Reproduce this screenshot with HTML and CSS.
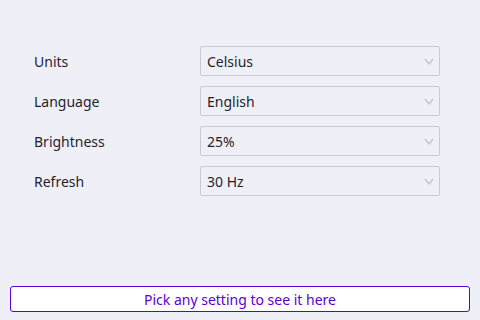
FILE: index.html
```html
<!DOCTYPE html>
<html lang="en">
<head>
    <meta charset="UTF-8">
    <meta name="viewport" content="width=device-width, initial-scale=1.0">
    <title>Settings</title>
    <link rel="stylesheet" href="styles.css">
</head>
<body>
    <div class="page">
        <div class="settings">
            <div class="setting-row">
                <label class="setting-label" for="units">Units</label>
                <div class="select-wrap">
                    <select class="setting-select" id="units">
                        <option>Celsius</option>
                        <option>Fahrenheit</option>
                    </select>
                    <svg class="chevron" viewBox="0 0 10 7" width="10" height="7"><path d="M1 1 L5 6 L9 1" fill="none" stroke="currentColor" stroke-width="1.4"/></svg>
                </div>
            </div>
            <div class="setting-row">
                <label class="setting-label" for="language">Language</label>
                <div class="select-wrap">
                    <select class="setting-select" id="language">
                        <option>English</option>
                        <option>Deutsch</option>
                    </select>
                    <svg class="chevron" viewBox="0 0 10 7" width="10" height="7"><path d="M1 1 L5 6 L9 1" fill="none" stroke="currentColor" stroke-width="1.4"/></svg>
                </div>
            </div>
            <div class="setting-row">
                <label class="setting-label" for="brightness">Brightness</label>
                <div class="select-wrap">
                    <select class="setting-select" id="brightness">
                        <option>25%</option>
                        <option>50%</option>
                        <option>100%</option>
                    </select>
                    <svg class="chevron" viewBox="0 0 10 7" width="10" height="7"><path d="M1 1 L5 6 L9 1" fill="none" stroke="currentColor" stroke-width="1.4"/></svg>
                </div>
            </div>
            <div class="setting-row">
                <label class="setting-label" for="refresh">Refresh</label>
                <div class="select-wrap">
                    <select class="setting-select" id="refresh">
                        <option>30 Hz</option>
                        <option>60 Hz</option>
                    </select>
                    <svg class="chevron" viewBox="0 0 10 7" width="10" height="7"><path d="M1 1 L5 6 L9 1" fill="none" stroke="currentColor" stroke-width="1.4"/></svg>
                </div>
            </div>
        </div>
        <div class="status" id="status">Pick any setting to see it here</div>
    </div>

    <script>
        // Show the last picked value in the status bar
        document.querySelectorAll('.setting-select').forEach(sel => {
            sel.addEventListener('change', () => {
                const label = document.querySelector(`label[for="${sel.id}"]`).textContent;
                document.getElementById('status').textContent = `${label}: ${sel.value}`;
            });
        });
    </script>
</body>
</html>
```

FILE: styles.css
```css
:root {
    --bg-color: #efeff8;
    --text-color: #1f1f2a;
    --border-color: #c9c9d3;
    --chevron-color: #c4c4ce;
    --accent: #5b00d6;
}

html, body {
    height: 100%;
}

body {
    font-family: 'Noto Sans', 'Open Sans', sans-serif;
    background-color: var(--bg-color);
    color: var(--text-color);
    margin: 0;
}

.page {
    height: 100%;
    box-sizing: border-box;
    padding: 46px 10px 8px 10px;
    display: flex;
    flex-direction: column;
}

.settings {
    flex: 1;
    display: flex;
    flex-direction: column;
    gap: 10px;
}

.setting-row {
    display: flex;
    align-items: center;
    height: 30px;
}

.setting-label {
    width: 166px;
    padding-left: 24px;
    font-size: 14px;
}

.select-wrap {
    position: relative;
    width: 240px;
    height: 30px;
}

.setting-select {
    appearance: none;
    -webkit-appearance: none;
    width: 100%;
    height: 100%;
    box-sizing: border-box;
    background-color: var(--bg-color);
    border: 1px solid var(--border-color);
    border-radius: 2px;
    color: var(--text-color);
    font-family: inherit;
    font-size: 14px;
    padding: 0 0 0 6px;
    margin: 0;
    outline: none;
}

.chevron {
    position: absolute;
    right: 6px;
    top: 12px;
    color: var(--chevron-color);
    pointer-events: none;
}

.status {
    height: 26px;
    box-sizing: border-box;
    background-color: #fff;
    border: 1px solid var(--accent);
    border-radius: 3px;
    color: var(--accent);
    font-size: 14px;
    display: flex;
    align-items: center;
    justify-content: center;
}
```
